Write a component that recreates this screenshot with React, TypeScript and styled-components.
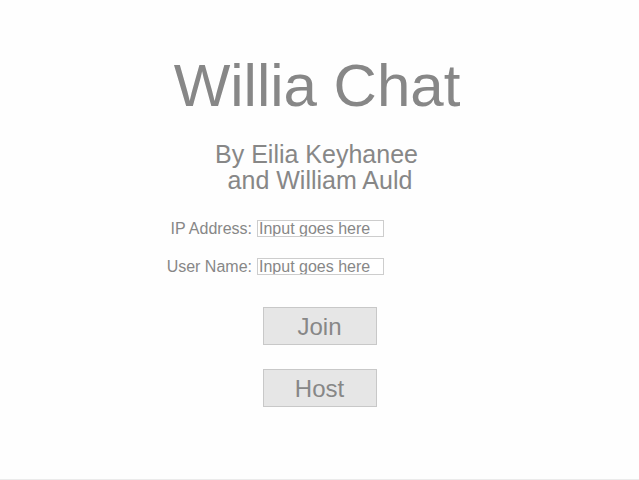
import styled, { createGlobalStyle } from "styled-components"

const Global = createGlobalStyle`
html, body {
    margin: 0;
    padding: 0;
    background: #fefefe;
}
body {
    font-family: "Liberation Sans", Arial, sans-serif;
    color: #878787;
}
`

const Page = styled.div`
box-sizing: border-box;
height: 480px;
border-bottom: 1px solid #ebebeb;
display: flex;
flex-direction: column;
align-items: center;
padding-top: 52px;
`

const Title = styled.h1`
margin: 0;
padding-right: 5px;
font-size: 60px;
font-weight: normal;
line-height: 67px;
`

const Subtitle = styled.h2`
margin: 22px 0 0;
padding-right: 6px;
font-size: 25px;
font-weight: normal;
line-height: 26px;
text-align: center;
`

const Form = styled.div`
align-self: stretch;
display: grid;
grid-template-columns: 1fr 127px 1fr;
column-gap: 5px;
row-gap: 21px;
margin-top: 27px;
padding-left: 2px;
`

const Label = styled.label`
grid-column: 1;
justify-self: end;
font-size: 16px;
line-height: 17px;
`

const Field = styled.input`
grid-column: 2;
box-sizing: border-box;
width: 127px;
height: 17px;
margin: 0;
padding: 0 1px;
border: 1px solid #cdcdcd;
background: #fff;
font-family: "Liberation Sans", Arial, sans-serif;
font-size: 16px;
color: #878787;
outline: none;

&::placeholder {
    color: #878787;
    opacity: 1;
}
`

const Buttons = styled.div`
display: flex;
flex-direction: column;
gap: 24px;
margin-top: 32px;
`

const Button = styled.button`
box-sizing: border-box;
width: 114px;
height: 38px;
margin: 0;
padding: 2px 0 0;
border: 1px solid #c8c8c8;
background: #e6e6e6;
color: #878787;
font-family: "Liberation Sans", Arial, sans-serif;
font-size: 24px;
cursor: pointer;
`

export default function App() {
    return (
        <Page>
            <Global />
            <Title>Willia Chat</Title>
            <Subtitle>
                By Eilia Keyhanee
                <br />
                &nbsp;and William Auld
            </Subtitle>
            <Form>
                <Label>IP Address:</Label>
                <Field placeholder="Input goes here" />
                <Label>User Name:</Label>
                <Field placeholder="Input goes here" />
            </Form>
            <Buttons>
                <Button>Join</Button>
                <Button>Host</Button>
            </Buttons>
        </Page>
    )
}
